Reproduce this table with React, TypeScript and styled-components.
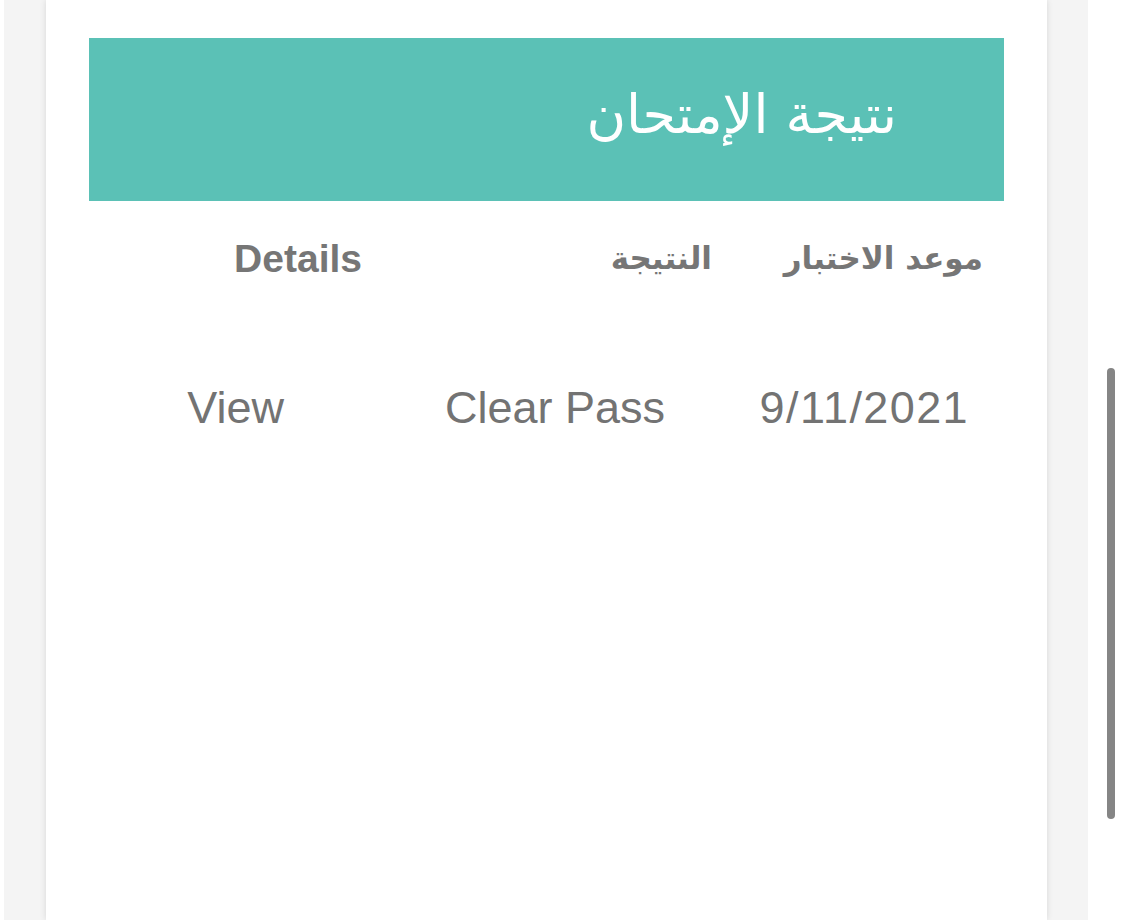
import React from "react";
import styled, { createGlobalStyle } from "styled-components";

const Global = createGlobalStyle`
  html, body { margin: 0; padding: 0; height: 920px; overflow: hidden; background: #ffffff; }
  #root { height: 920px; }
`;

const Page = styled.div`
  display: flex;
  height: 920px;
  padding-left: 4px;
  background: #ffffff;
`;

const Backdrop = styled.div`
  width: 1084px;
  height: 920px;
  background: #f4f4f4;
  display: flex;
  padding-left: 42px;
  box-sizing: border-box;
`;

const Card = styled.div`
  width: 1001px;
  height: 920px;
  background: #ffffff;
  box-shadow: 0 0 6px rgba(0, 0, 0, 0.12);
  padding: 38px 43px 0;
  box-sizing: border-box;
  display: flex;
  flex-direction: column;
`;

const Banner = styled.div`
  height: 163px;
  background: #5bc1b6;
  direction: rtl;
  display: flex;
  align-items: center;
  padding-right: 107px;
`;

const Title = styled.h1`
  margin: 0;
  color: #ffffff;
  font-family: "DejaVu Sans", "Noto Sans", sans-serif;
  font-weight: 400;
  font-size: 54px;
  line-height: 1;
  transform: translateY(-5px);
`;

const Row = styled.div<{ $height: number; $top: number }>`
  direction: rtl;
  display: grid;
  grid-template-columns: 264px 320px 1fr;
  height: ${(p) => p.$height}px;
  margin-top: ${(p) => p.$top}px;
  align-items: center;
`;

const HeadCell = styled.div<{ $inset: number; $latin?: boolean }>`
  padding-right: ${(p) => p.$inset}px;
  color: #767676;
  font-family: ${(p) =>
    p.$latin ? `"Liberation Sans", Arial, sans-serif` : `"DejaVu Sans", "Noto Sans", sans-serif`};
  font-weight: 700;
  font-size: ${(p) => (p.$latin ? 39 : 31)}px;
  line-height: 1;
  white-space: nowrap;
`;

const DataCell = styled.div<{ $inset: number; $spacing?: number }>`
  padding-right: ${(p) => p.$inset}px;
  color: #737373;
  font-family: "Liberation Sans", Arial, sans-serif;
  font-size: 45px;
  letter-spacing: ${(p) => p.$spacing ?? 0}px;
  line-height: 1;
  white-space: nowrap;
  direction: ltr;
  text-align: right;
`;

const Rail = styled.div`
  flex: 1;
  display: flex;
  justify-content: flex-start;
  padding-left: 19px;
  padding-top: 368px;
`;

const Thumb = styled.div`
  width: 8px;
  height: 451px;
  border-radius: 4px;
  background: #858585;
`;

export default function App() {
  return (
    <>
      <Global />
      <Page>
        <Backdrop>
          <Card>
            <Banner>
              <Title>نتيجة الإمتحان</Title>
            </Banner>
            <Row $height={60} $top={27}>
              <HeadCell $inset={21}>موعد الاختبار</HeadCell>
              <HeadCell $inset={28}>النتيجة</HeadCell>
              <HeadCell $inset={58} $latin>
                Details
              </HeadCell>
            </Row>
            <Row $height={80} $top={79}>
              <DataCell $inset={35} $spacing={1.4}>
                9/11/2021
              </DataCell>
              <DataCell $inset={75}>Clear Pass</DataCell>
              <DataCell $inset={136}>View</DataCell>
            </Row>
          </Card>
        </Backdrop>
        <Rail>
          <Thumb />
        </Rail>
      </Page>
    </>
  );
}
